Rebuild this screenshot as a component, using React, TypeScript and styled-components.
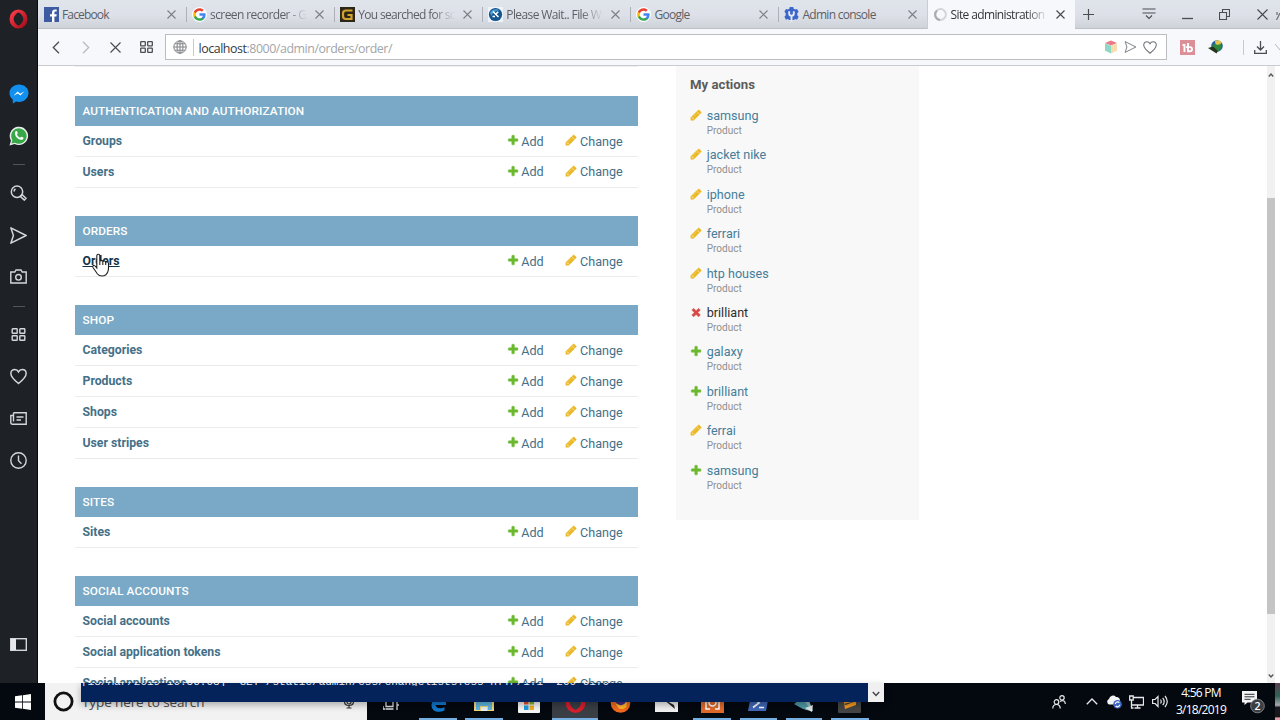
import React from "react";
import styled, { createGlobalStyle } from "styled-components";

const UI = `"Open Sans", "Noto Sans", sans-serif`;

const Global = createGlobalStyle`
  * { box-sizing: border-box; }
  body { margin: 0; background: #fff; overflow: hidden; }
`;

const Screen = styled.div`
  position: relative;
  width: 1280px;
  height: 720px;
  overflow: hidden;
  display: flex;
  flex-direction: column;
  font-family: Roboto, sans-serif;
`;
const Desktop = styled.div`
  display: flex;
  height: 683px;
`;

/* ---------- Opera sidebar ---------- */
const Rail = styled.nav`
  width: 38px;
  background: #1e2226;
  border-right: 1px solid #08090b;
  display: flex;
  flex-direction: column;
  align-items: center;
  padding-bottom: 30px;
`;
const RailItem = styled.div<{ $h: number }>`
  height: ${(p) => p.$h}px;
  width: 37px;
  flex: none;
  display: flex;
  align-items: center;
  justify-content: center;
`;
const RailRule = styled.div<{ $gap: number }>`
  flex: none;
  width: 12px;
  height: 1px;
  background: #51565a;
  margin-bottom: ${(p) => p.$gap}px;
`;
const Push = styled.div`
  flex: 1;
`;

/* ---------- Browser frame ---------- */
const Browser = styled.div`
  flex: 1;
  min-width: 0;
  display: flex;
  flex-direction: column;
`;
const TabStrip = styled.div`
  height: 29px;
  flex: none;
  display: flex;
  background: linear-gradient(#e0e4eb, #dde0e8 55%, #ced2d9);
  border-bottom: 1px solid #bdc1c7;
`;
const TabBox = styled.div<{ $active?: boolean }>`
  width: 148.1px;
  height: ${(p) => (p.$active ? 29 : 28)}px;
  flex: none;
  display: flex;
  align-items: center;
  padding: 0 10px 0 6px;
  position: relative;
  background: ${(p) => (p.$active ? "#f7f8fb" : "transparent")};
  border-left: ${(p) => (p.$active ? "1px solid #c9cdd3" : "0")};
  padding-left: ${(p) => (p.$active ? 5 : 6)}px;
  &:not(:last-child)::after {
    content: "";
    position: absolute;
    right: -1px;
    top: 7px;
    width: 1px;
    height: 15px;
    background: ${(p) => (p.$active ? "transparent" : "#adb1b8")};
  }
`;
const TabTitle = styled.div<{ $active?: boolean; $ls: number; $fade?: boolean }>`
  flex: 1;
  margin: 1px 6px 0 3px;
  font: 12px ${UI};
  letter-spacing: ${(p) => p.$ls}px;
  line-height: 18px;
  white-space: nowrap;
  color: ${(p) => (p.$active ? "#33363a" : "#5b5f66")};
  mask-image: ${(p) => (p.$fade ? "linear-gradient(to right, #000 76%, transparent 98%)" : "none")};
`;
const Slot = styled.div<{ $w: number }>`
  width: ${(p) => p.$w}px;
  height: 100%;
  flex: none;
  display: flex;
  align-items: center;
  justify-content: center;
`;
const Toolbar = styled.div`
  height: 37px;
  flex: none;
  display: flex;
  align-items: center;
  padding-left: 3px;
  background: #f7f8fb;
  border-bottom: 1px solid #c9cbd1;
`;
const Address = styled.div`
  width: 1002px;
  height: 26px;
  flex: none;
  display: flex;
  align-items: center;
  gap: 4px;
  background: #fff;
  border: 1px solid #bbbdc1;
  padding: 0 9px 0 7px;
  margin-left: 3px;
`;
const AddressRule = styled.div<{ $h: number }>`
  width: 1px;
  height: ${(p) => p.$h}px;
  background: #c8cacd;
`;
const Url = styled.div`
  flex: 1;
  margin-left: -1.5px;
  padding-top: 2px;
  font: 12.4px ${UI};
  letter-spacing: -0.44px;
  color: #a3a5a8;
  b {
    font-weight: 400;
    color: #35383c;
  }
`;

/* ---------- Admin page ---------- */
const Page = styled.main`
  flex: 1;
  min-height: 0;
  display: flex;
  background: #fff;
  padding-left: 37px;
  overflow: hidden;
`;
const AppList = styled.div`
  width: 562.5px;
  flex: none;
  border-top: 1px solid #eee;
  padding-top: 29px;
`;
const Module = styled.section`
  margin-bottom: 28.3px;
`;
const Caption = styled.h2`
  margin: 0;
  height: 30px;
  background: #79a9c6;
  color: #fff;
  font-size: 11.8px;
  font-weight: 500;
  letter-spacing: 0.08px;
  line-height: 31px;
  padding-left: 7.5px;
  text-transform: uppercase;
`;
const ModelRow = styled.div`
  height: 30.9px;
  display: flex;
  align-items: center;
  border-bottom: 1px solid #ececec;
  padding: 0.3px 0 0 7.5px;
  font-size: 12.6px;
  color: #447088;
`;
const ModelName = styled.a<{ $hover?: boolean }>`
  width: 424px;
  font-weight: 700;
  font-size: 12.25px;
  color: ${(p) => (p.$hover ? "#123347" : "#447088")};
  text-decoration: ${(p) => (p.$hover ? "underline" : "none")};
`;
const RowLink = styled.a<{ $w: number }>`
  width: ${(p) => p.$w}px;
  display: flex;
  align-items: center;
  gap: 2.6px;
  svg {
    margin-bottom: 2px;
  }
`;
const Recent = styled.aside`
  width: 243px;
  height: 454px;
  margin-left: 38px;
  flex: none;
  background: #f8f8f8;
  padding: 9px 0 0 14.5px;
`;
const RecentTitle = styled.h3`
  margin: 0 0 14px;
  font-size: 13.2px;
  line-height: 19px;
  font-weight: 700;
  color: #5c5c5c;
`;
const Action = styled.div`
  height: 39.4px;
  display: flex;
  gap: 4.5px;
  svg {
    margin-top: 1px;
  }
`;
const ActionName = styled.div<{ $dark?: boolean }>`
  font-size: 12.6px;
  line-height: 16px;
  color: ${(p) => (p.$dark ? "#2c2c2c" : "#447e9b")};
`;
const ActionType = styled.div`
  font-size: 10px;
  line-height: 14px;
  color: #8f8f8f;
`;
const ScrollTrack = styled.div`
  width: 8px;
  margin-left: auto;
  margin-right: 5px;
  background: #f1f1f1;
  display: flex;
  flex-direction: column;
  align-items: center;
  padding: 6px 0 4px;
`;
const ScrollThumb = styled.div`
  width: 8px;
  height: 416px;
  margin-top: 120px;
  margin-bottom: auto;
  background: #c4c4c4;
`;

/* ---------- Taskbar ---------- */
const Taskbar = styled.footer`
  height: 37px;
  display: flex;
  background: #04080f;
  color: #fff;
`;
const SearchBox = styled.div`
  width: 322px;
  height: 37px;
  background: #f2f2f2;
  display: flex;
  align-items: center;
  padding: 0 12px 0 8px;
  font: 13.5px ${UI};
  letter-spacing: -0.1px;
  color: #4b4b4b;
  span {
    flex: 1;
    margin-left: 8px;
  }
`;
const TaskButton = styled.div<{ $run?: number; $active?: boolean; $w?: number }>`
  width: ${(p) => p.$w ?? 45.75}px;
  height: 37px;
  flex: none;
  display: flex;
  align-items: center;
  justify-content: center;
  padding-top: 3px;
  position: relative;
  background: ${(p) => (p.$active ? "#3a3e45" : "none")};
  &::after {
    content: "";
    position: absolute;
    bottom: 0;
    height: 2px;
    width: ${(p) => p.$run ?? 0}px;
    background: #76b0e3;
  }
`;
const Clock = styled.div`
  width: 52px;
  margin-right: 7px;
  font: 12px/17px ${UI};
  letter-spacing: -0.75px;
  text-align: center;
  white-space: nowrap;
  padding-top: 1px;
`;
const EdgeStripe = styled.div`
  width: 5px;
  background: linear-gradient(#5d3f56, #2f6152 35%, #a7a7b0 60%, #171a1f 66%, #191417 92%, #e39aa7 94%);
`;

/* ---------- Console window lying over the taskbar ---------- */
const ConsoleWindow = styled.div`
  position: absolute;
  left: 81px;
  top: 683px;
  width: 803px;
  height: 19px;
  display: flex;
  justify-content: space-between;
  background: #03235a;
  box-shadow: 0 3px 7px rgba(0, 0, 0, 0.3);
`;
const ConsoleLine = styled.div`
  height: 3px;
  overflow: hidden;
  display: flex;
  align-items: flex-end;
  font: 11px/8px "Liberation Mono", monospace;
  white-space: pre;
  color: #e8edf5;
`;
const ConsoleScroll = styled.div`
  width: 16px;
  height: 19px;
  background: #f0f0f0;
  display: flex;
  align-items: center;
  justify-content: center;
  padding-top: 3px;
`;
const Pointer = styled.svg`
  position: absolute;
  left: 91px;
  top: 253px;
`;

/* ---------- Icons ---------- */
const Stroke = ({ w, h = w, c = "#d4d7da", sw = 1.3, d, children }: { w: number; h?: number; c?: string; sw?: number; d?: string; children?: React.ReactNode }) => (
  <svg width={w} height={h} viewBox={`0 0 ${w} ${h}`} fill="none" stroke={c} strokeWidth={sw}>
    {d && <path d={d} />}
    {children}
  </svg>
);
const adminPaths = {
  add: "M1600 796v192q0 40-28 68t-68 28h-416v416q0 40-28 68t-68 28h-192q-40 0-68-28t-28-68v-416h-416q-40 0-68-28t-28-68v-192q0-40 28-68t68-28h416v-416q0-40 28-68t68-28h192q40 0 68 28t28 68v416h416q40 0 68 28t28 68z",
  change: "M491 1536l91-91-235-235-91 91v107h128v128h107zm523-928q0-22-22-22-10 0-17 7l-542 542q-7 7-7 17 0 22 22 22 10 0 17-7l542-542q7-7 7-17zm-54-192l416 416-832 832h-416v-416zm683 96q0 53-37 90l-166 166-416-416 166-165q36-38 90-38 53 0 91 38l235 234q37 39 37 91z",
  del: "M1490 1322q0 40-28 68l-136 136q-28 28-68 28t-68-28l-294-294-294 294q-28 28-68 28t-68-28l-136-136q-28-28-28-68t28-68l294-294-294-294q-28-28-28-68t28-68l136-136q28-28 68-28t68 28l294 294 294-294q28-28 68-28t68 28l136 136q28 28 28 68t-28 68l-294 294 294 294q28 28 28 68z",
};
const adminColors = { add: "#6cb82f", change: "#ebb927", del: "#d84a48" };
type Kind = keyof typeof adminPaths;
const AdminIcon = ({ kind }: { kind: Kind }) => (
  <svg width="12.2" height="12.2" viewBox="0 0 1792 1792" fill={adminColors[kind]} stroke={adminColors[kind]} strokeWidth="70">
    <path d={adminPaths[kind]} />
  </svg>
);
const Cross = ({ size = 9, c = "#7b7f86" }: { size?: number; c?: string }) => (
  <Stroke w={size} c={c} sw={1.1} d={`M.5 .5L${size - 0.5} ${size - 0.5}M${size - 0.5} .5L.5 ${size - 0.5}`} />
);
const Heart = ({ w = 16, c, sw }: { w?: number; c?: string; sw?: number }) => (
  <svg width={w} height={w} viewBox="0 0 16 16" fill="none" stroke={c ?? "#d4d7da"} strokeWidth={sw ?? 1.4}>
    <path d="M8 14.6C3 10.6.8 8 .8 5.2.8 2.900 2.500 1.400 4.500 1.400 6 1.400 7.300 2.200 8 3.600 8.700 2.200 10 1.400 11.500 1.400c2 0 3.700 1.500 3.700 3.800C15.200 8 13 10.600 8 14.600z" />
  </svg>
);
const Tiles = ({ w, h, c }: { w: number; h: number; c: string }) => (
  <svg width={w} height={h} viewBox="0 0 14 13" fill="none" stroke={c} strokeWidth="1.4">
    <rect x=".7" y=".7" width="5" height="4.600" rx=".6" />
    <rect x="8.300" y=".7" width="5" height="4.600" rx=".6" />
    <rect x=".7" y="7.700" width="5" height="4.600" rx=".6" />
    <rect x="8.300" y="7.700" width="5" height="4.600" rx=".6" />
  </svg>
);
const Send = ({ w, h, c, sw }: { w: number; h: number; c: string; sw: number }) => (
  <svg width={w} height={h} viewBox="0 0 16 16" fill="none" stroke={c} strokeWidth={sw} strokeLinejoin="round">
    <path d="M.8 .8L15.200 8 .8 15.200 3.200 8z" />
  </svg>
);
const GoogleG = () => (
  <svg width="15" height="15" viewBox="-1 -1 26 26">
    <circle cx="12" cy="12" r="13" fill="#fff" />
    <path fill="#4285F4" d="M22.560 12.250c0-.78-.07-1.530-.2-2.250H12v4.260h5.920c-.26 1.370-1.040 2.530-2.210 3.310v2.770h3.570c2.080-1.920 3.280-4.740 3.280-8.090z" />
    <path fill="#34A853" d="M12 23c2.970 0 5.460-.98 7.280-2.660l-3.570-2.770c-.98.66-2.230 1.060-3.710 1.060-2.860 0-5.290-1.930-6.160-4.530H2.180v2.840C3.990 20.530 7.700 23 12 23z" />
    <path fill="#FBBC05" d="M5.840 14.090c-.22-.66-.35-1.360-.35-2.090s.13-1.430.35-2.090V7.070H2.180C1.430 8.550 1 10.220 1 12s.43 3.450 1.180 4.930l3.660-2.840z" />
    <path fill="#EA4335" d="M12 5.380c1.620 0 3.060.56 4.210 1.640l3.150-3.150C17.450 2.090 14.970 1 12 1 7.700 1 3.990 3.470 2.180 7.070l3.660 2.840c.87-2.600 3.300-4.530 6.160-4.530z" />
  </svg>
);
const FacebookMark = () => (
  <svg width="15" height="15" viewBox="0 0 15 15">
    <rect width="15" height="15" fill="#3c5ba0" />
    <path fill="#fff" d="M8 15V9.500H6V7.200h2V5.500C8 3.400 9.200 2.400 11 2.400h1.700v2.200h-1.200c-.9 0-1.100.4-1.100 1.100v1.500h2.300l-.3 2.300h-2V15z" />
  </svg>
);
const GoldMark = () => (
  <svg width="15" height="15" viewBox="0 0 15 15">
    <rect width="15" height="15" fill="#2b2618" />
    <path d="M12.500 3.500H6Q3 3.500 3 6.500V9Q3 12 6 12H11.500V8H7.500" fill="none" stroke="#d3a12c" strokeWidth="2.200" />
  </svg>
);
const FileMark = () => (
  <svg width="15" height="15" viewBox="0 0 15 15">
    <rect width="15" height="15" fill="#eef3f7" />
    <circle cx="7.500" cy="7.500" r="6.600" fill="#14558f" />
    <path d="M2 6C3 2.500 8 1 11.500 3.200 9 3.500 5 4.500 3.500 9z" fill="#4d9bd0" />
    <path d="M5 4.500l5.500 5.500M10.200 4.800l-2 2M4.500 9.500h2.500" stroke="#fff" strokeWidth="1.600" />
  </svg>
);
const ConsoleMark = () => (
  <svg width="15" height="15" viewBox="0 0 15 15">
    <path d="M5.800 0h3.400l.5 1.800 1.500.8L13 2l1.600 2.800-1.300 1.500v2l1.300 1.500L13 12.700l-1.800-.6-1.500.9H5.300l-1.500-.9-1.800.6L.4 9.800l1.300-1.500v-2L.4 4.800 2 2l1.800.6 1.500-.8z" fill="#3b66c9" />
    <path d="M5.200 4.300v2.400Q5.200 8.800 7.500 8.800t2.300-2.100V4.300M7.500 8.800V15" fill="none" stroke="#e6e9f1" strokeWidth="1.900" />
  </svg>
);
const Spinner = () => (
  <Stroke w={15} sw={2} c="#d3d5d8">
    <circle cx="7.500" cy="7.500" r="5.400" />
    <path d="M4 3.400A5.400 5.400 0 0 0 7 12.900" stroke="#a9acb0" />
  </Stroke>
);
const Globe = () => (
  <Stroke w={14} c="#7f8286" sw={1}>
    <circle cx="7" cy="7" r="6.200" />
    <ellipse cx="7" cy="7" rx="3" ry="6.200" />
    <path d="M.8 7h12.400M1.800 3.800h10.400M1.800 10.200h10.400M7 .8v12.400" />
  </Stroke>
);

const tabs = [
  { title: "Facebook", icon: <FacebookMark />, ls: -0.85 },
  { title: "screen recorder - G", icon: <GoogleG />, ls: -0.6, fade: true },
  { title: "You searched for sc", icon: <GoldMark />, ls: -0.67, fade: true },
  { title: "Please Wait.. File Wi", icon: <FileMark />, ls: -0.6, fade: true },
  { title: "Google", icon: <GoogleG />, ls: -0.7 },
  { title: "Admin console", icon: <ConsoleMark />, ls: -0.72 },
  { title: "Site administration", icon: <Spinner />, ls: -0.62, active: true, fade: true },
];
const modules = [
  { name: "Authentication and Authorization", models: ["Groups", "Users"] },
  { name: "Orders", models: ["Orders"] },
  { name: "Shop", models: ["Categories", "Products", "Shops", "User stripes"] },
  { name: "Sites", models: ["Sites"] },
  { name: "Social Accounts", models: ["Social accounts", "Social application tokens", "Social applications"] },
];
const actions: { kind: Kind; name: string }[] = [
  { kind: "change", name: "samsung" },
  { kind: "change", name: "jacket nike" },
  { kind: "change", name: "iphone" },
  { kind: "change", name: "ferrari" },
  { kind: "change", name: "htp houses" },
  { kind: "del", name: "brilliant" },
  { kind: "add", name: "galaxy" },
  { kind: "add", name: "brilliant" },
  { kind: "change", name: "ferrai" },
  { kind: "add", name: "samsung" },
];

const Sidebar = () => (
  <Rail>
    <RailItem $h={37}>
      <svg width="19" height="20" viewBox="0 0 19 20">
        <defs>
          <linearGradient id="op" x1="0" y1="0" x2="1" y2="1">
            <stop offset="0" stopColor="#ff3a48" />
            <stop offset="1" stopColor="#a50e1c" />
          </linearGradient>
        </defs>
        <ellipse cx="9.500" cy="10" rx="6.900" ry="7.400" fill="none" stroke="url(#op)" strokeWidth="4.200" />
        <ellipse cx="9.500" cy="10" rx="3.800" ry="6.400" fill="#1e2226" />
      </svg>
    </RailItem>
    <RailItem $h={35} />
    <RailItem $h={43}>
      <svg width="20" height="20" viewBox="0 0 20 20">
        <path d="M10 .5C4.700.5.500 4.200.500 9c0 2.800 1.300 5 3.300 6.600V19.500l3.300-2c.9.200 1.900.4 2.900.4 5.300 0 9.500-3.900 9.500-8.900S15.300.5 10 .5z" fill="#1290f0" />
        <path d="M4.500 11.800L8.600 7.500l2.600 2.200 4.300-2.500-4.100 4.400-2.500-2.200z" fill="#fff" />
      </svg>
    </RailItem>
    <RailItem $h={42}>
      <svg width="20" height="20" viewBox="0 0 20 20">
        <path d="M.5 19.500L2 14.600A9.200 9.200 0 1 1 5.600 18z" fill="#e9eeea" />
        <path d="M2.400 17.600l1-3.400a7.700 7.700 0 1 1 2.600 2.500z" fill="#37a847" />
        <path d="M6.500 5.500c1-.9 1.700-.2 2.200 1.400.2.700-.7 1-.7 1.500.6 1.500 1.700 2.600 3.200 3.200.6 0 .8-1 1.500-.8 1.900.8 2.300 1.100 1.500 2.100-1.300 1.600-3.300 1-5.100-.2C7 11.400 4.800 7.500 6.500 5.500z" fill="#fff" />
      </svg>
    </RailItem>
    <RailItem $h={7} />
    <RailRule $gap={6} />
    <RailItem $h={43}>
      <Stroke w={17} h={16} sw={1.5}>
        <circle cx="7" cy="6.700" r="5.700" />
        <path d="M11 10.500l1-1 4 3.800-1.700 1.800-4-3.700zM4 6.500A3 3 0 0 1 5.500 4" />
      </Stroke>
    </RailItem>
    <RailItem $h={42}>
      <Send w={17} h={17} c="#d4d7da" sw={1.4} />
    </RailItem>
    <RailItem $h={41}>
      <Stroke w={17} h={15} sw={1.4}>
        <path d="M.8 3h4l1.200-2h5l1.200 2h4v11H.8z" />
        <circle cx="8.500" cy="8.300" r="2.800" />
      </Stroke>
    </RailItem>
    <RailItem $h={9} />
    <RailRule $gap={6} />
    <RailItem $h={42}>
      <Tiles w={15} h={13} c="#d4d7da" />
    </RailItem>
    <RailItem $h={42}>
      <Heart w={17} />
    </RailItem>
    <RailItem $h={42}>
      <Stroke w={17} h={13} sw={1.4}>
        <path d="M3.500 .8h12.700v11.400H2.500Q.8 12.200.8 10.500V3.500h2.700M3.500 .8V9.500M6.500 5h7M6.500 8h4.500" />
      </Stroke>
    </RailItem>
    <RailItem $h={42}>
      <Stroke w={17} sw={1.4}>
        <circle cx="8.500" cy="8.500" r="7.700" />
        <path d="M8.500 3.500v5.200l3 3" />
      </Stroke>
    </RailItem>
    <Push />
    <RailItem $h={18}>
      <Stroke w={17} h={13} sw={1.4}>
        <rect x=".7" y=".7" width="15.600" height="11.600" />
        <path d="M1 1h5v11H1z" fill="#e6e8ea" stroke="none" />
      </Stroke>
    </RailItem>
  </Rail>
);

export default function App() {
  return (
    <Screen>
      <Global />
      <Desktop>
        <Sidebar />
        <Browser>
          <TabStrip>
            {tabs.map((t, i) => (
              <TabBox key={i} $active={t.active}>
                {t.icon}
                <TabTitle $active={t.active} $ls={t.ls} $fade={t.fade}>{t.title}</TabTitle>
                <Cross c={t.active ? "#45484d" : undefined} />
              </TabBox>
            ))}
            <Slot $w={27}><Stroke w={11} c="#4a4d53" d="M5.500 0v11M0 5.500h11" sw={1.2} /></Slot>
            <Push />
            <Slot $w={38}><Stroke w={14} h={12} c="#4a4d53" sw={1.1} d="M.5 1h13M.5 5h13M4 7.500l3 3 3-3" /></Slot>
            <Slot $w={38}><Stroke w={11} h={12} c="#4a4d53" d="M0 10.500h11" /></Slot>
            <Slot $w={37}><Stroke w={11} h={11} c="#4a4d53" sw={1.1} d="M.5 3.500h7v7h-7zM3.500 3.500V.5h7v7h-3" /></Slot>
            <Slot $w={5} />
            <Slot $w={28}><Cross size={11} c="#45484d" /></Slot>
            <Slot $w={4}><Stroke w={4} h={11} c="#6a6d72" sw={1.200} d="M.5 11L4 4M1 3v3" /></Slot>
          </TabStrip>
          <Toolbar>
            <Slot $w={30}><Stroke w={8} h={13} c="#4a4d53" d="M7 .8L1.300 6.500 7 12.200" /></Slot>
            <Slot $w={30}><Stroke w={8} h={13} c="#b9bbc0" d="M1 .8l5.700 5.700L1 12.200" /></Slot>
            <Slot $w={29}><Cross size={11} c="#45484d" /></Slot>
            <Slot $w={32}><Tiles w={13} h={12} c="#4a4d53" /></Slot>
            <Address>
              <Globe />
              <Slot $w={5}><AddressRule $h={17} /></Slot>
              <Url><b>localhost</b>:8000/admin/orders/order/</Url>
              <Slot $w={14}>
                <svg width="14" height="14" viewBox="0 0 14 14">
                  <path d="M7 .5l6 2.500-6 2.500L1 3z" fill="#ea7a86" />
                  <path d="M1 3.200l6 2.500v7.800L1 10.800z" fill="#8fd9c4" />
                  <path d="M13 3.200L7 5.700v7.800l6-2.700z" fill="#f7dcae" />
                </svg>
              </Slot>
              <Slot $w={17}><Send w={13} h={12} c="#7c8085" sw={1.3} /></Slot>
              <Slot $w={14}><Heart w={15} c="#6f7378" sw={1.2} /></Slot>
            </Address>
            <Slot $w={40}>
              <svg width="15" height="15" viewBox="0 0 15 15">
                <rect width="15" height="15" fill="#dc8f97" />
                <path d="M2.500 5h2v7M8 3v8.300h2q2 0 2-2.100t-2-2.100H6" fill="none" stroke="#fff" strokeWidth="1.900" />
              </svg>
            </Slot>
            <Slot $w={18}>
              <svg width="16" height="14" viewBox="0 0 16 14">
                <circle cx="9" cy="6" r="5.800" fill="#27639b" />
                <path d="M7 1q4-2 6.500 1.500l-2 3-4-1z" fill="#e5c64a" />
                <path d="M4 6q3-3 5-1l4-1q1.500 5-3 7.500z" fill="#2c8a3a" />
                <path d="M0 8l5-1.500 5 4.500-1.500 2.500z" fill="#27351f" />
              </svg>
            </Slot>
            <Slot $w={7} />
            <Slot $w={22}><AddressRule $h={15} /></Slot>
            <Stroke w={13} h={13} c="#4a4d53" d="M6.500 0v8.500M3 5.500l3.500 3.500L10 5.500M.7 9v3.300h11.600V9" />
            <Slot $w={8} />
            <Stroke w={5} h={13} c="#b5b7bb" sw={1} d="M0 3l5 6" />
          </Toolbar>
          <Page>
            <AppList>
              {modules.map((m) => (
                <Module key={m.name}>
                  <Caption>{m.name}</Caption>
                  {m.models.map((name) => (
                    <ModelRow key={name}>
                      <ModelName $hover={name === "Orders"}><span>{name}</span></ModelName>
                      <RowLink $w={58.8}><AdminIcon kind="add" />Add</RowLink>
                      <RowLink $w={70}><AdminIcon kind="change" />Change</RowLink>
                    </ModelRow>
                  ))}
                </Module>
              ))}
            </AppList>
            <Recent>
              <RecentTitle>My actions</RecentTitle>
              {actions.map((a, i) => (
                <Action key={i}>
                  <AdminIcon kind={a.kind} />
                  <div>
                    <ActionName $dark={a.kind === "del"}>{a.name}</ActionName>
                    <ActionType>Product</ActionType>
                  </div>
                </Action>
              ))}
            </Recent>
            <ScrollTrack>
              <Stroke w={6} h={6} c="#55585c" sw={1.4} d="M.8 4.500L3 2l2.200 2.500" />
              <ScrollThumb />
              <Stroke w={6} h={6} c="#55585c" sw={1.400} d="M.8 1.500L3 4l2.200-2.500" />
            </ScrollTrack>
          </Page>
        </Browser>
      </Desktop>

      <Taskbar>
        <Slot $w={45}>
          <svg width="16" height="16" viewBox="0 0 16 16" fill="#fff">
            <path d="M0 2.300L7 1.300V7.600H0zM7.800 1.200L16 0v7.600H7.800zM0 8.400h7v6.300L0 13.700zM7.800 8.400H16V16l-8.200-1.200z" />
          </svg>
        </Slot>
        <SearchBox>
          <Stroke w={21} c="#111" sw={2.8}><circle cx="10.500" cy="10.500" r="8.600" /></Stroke>
          <span>Type here to search</span>
          <Stroke w={12} h={15} c="#333" sw={1.200} d="M4 3a2 2 0 0 1 4 0v5a2 2 0 0 1-4 0zM1.500 7.500q0 4 4.500 4t4.500-4M6 11.500V14M3.500 14h5" />
        </SearchBox>
        <TaskButton $w={48}>
          <Stroke w={16} h={14} sw={1.300} d="M0 1h11M0 13h2M3 4.500h7v6H3zM0 10v3M10.500 13h-8M14 0v14M14 9h2" c="#e2e2e2" />
        </TaskButton>
        <TaskButton $run={38}>
          <svg width="18" height="18" viewBox="0 0 18 18">
            <path d="M1 9C2 3.500 5.500 1 9.500 1 14 1 17 4 17 8.500V11H6.500c.3 3 4.500 4.500 9 2.200v3.300C9 19.500 2 17 2.500 10.500 3 7.500 5 6 6.500 5.500 4.500 6 2.500 7 1 9z" fill="#1179cf" />
          </svg>
        </TaskButton>
        <TaskButton $run={38}>
          <svg width="20" height="17" viewBox="0 0 20 17">
            <path d="M0 1h7l2 2h11v13H0z" fill="#f3d77a" />
            <path d="M2 7h16v8h-4v-4H6v4H2z" fill="#5fb8e0" />
            <path d="M7 12h6v4H7z" fill="#e9f2f4" />
          </svg>
        </TaskButton>
        <TaskButton>
          <svg width="22" height="19" viewBox="0 0 22 19">
            <rect y="3" width="22" height="16" rx="1" fill="#f6f6f6" />
            <path d="M6 6h4.500v4.500H6z" fill="#e6522c" /><path d="M11.500 6H16v4.500h-4.500z" fill="#7cb52d" />
            <path d="M6 11.500h4.500V16H6z" fill="#1f9be0" /><path d="M11.500 11.500H16V16h-4.500z" fill="#f2b01e" />
          </svg>
        </TaskButton>
        <TaskButton $run={46} $active>
          <svg width="21" height="20" viewBox="0 0 21 20">
            <ellipse cx="10.500" cy="10" rx="7.700" ry="7.700" fill="none" stroke="#d81f2c" strokeWidth="4.400" />
            <ellipse cx="10.500" cy="10" rx="4.200" ry="6.700" fill="#3a3e45" />
          </svg>
        </TaskButton>
        <TaskButton>
          <svg width="21" height="20" viewBox="0 0 21 20">
            <circle cx="10.500" cy="10" r="9.800" fill="#f26a1f" />
            <circle cx="11" cy="9.500" r="5.600" fill="#4b2a7d" />
            <path d="M5 9q3 4 7 3 4-1 4-5 3 7-3 9-6 1-8-7z" fill="#ffb52b" />
          </svg>
        </TaskButton>
        <TaskButton>
          <svg width="23" height="17" viewBox="0 0 23 17">
            <rect width="23" height="17" fill="#f1f1f1" />
            <path d="M8 4l12 10-1-4z" fill="#222" />
          </svg>
        </TaskButton>
        <TaskButton $run={38}>
          <svg width="23" height="20" viewBox="0 0 23 20">
            <rect width="23" height="20" fill="#e0692a" />
            <path d="M5 9v7h4M18 9v7h-4" fill="none" stroke="#fff" strokeWidth="1.500" />
            <circle cx="11.500" cy="9.500" r="3.500" fill="none" stroke="#fff" strokeWidth="1.500" />
          </svg>
        </TaskButton>
        <TaskButton $run={37}>
          <svg width="21" height="16" viewBox="0 0 21 16">
            <path d="M3 0h18l-3 16H0z" fill="#3f68b8" />
            <path d="M6 3l5 5-6 4.500M11 12.500h5" fill="none" stroke="#fff" strokeWidth="1.700" />
          </svg>
        </TaskButton>
        <TaskButton $run={36}>
          <svg width="20" height="18" viewBox="0 0 20 18">
            <path d="M1 9L14 4l5 13-7-1z" fill="#8fb9bf" />
            <path d="M0 10l9-5 8 11-8-1z" fill="#4f9aa5" />
            <path d="M11 14l8-3-1 7z" fill="#dfe7e8" />
          </svg>
        </TaskButton>
        <TaskButton $run={38}>
          <svg width="23" height="20" viewBox="0 0 23 20">
            <rect width="23" height="20" rx="1" fill="#454545" />
            <path d="M5 4l13 4-13 3 3 1 10-4v4L7 16z" fill="#f79a1f" />
          </svg>
        </TaskButton>
        <Push />
        <Slot $w={44}>
          <Stroke w={14} h={14} c="#e6e8ea" sw={1.200}>
            <circle cx="4.500" cy="7" r="2.300" /><path d="M.8 13.500q0-4 3.700-4t3.700 4M8 6.500q2-1.500 4-.5 1.300 1 1.300 3" />
            <circle cx="10" cy="2.800" r="2.200" />
          </Stroke>
        </Slot>
        <Slot $w={21}><Stroke w={12} h={7} c="#e6e8ea" d="M.8 6.200L6 1l5.200 5.200" /></Slot>
        <Slot $w={24}>
          <svg width="16" height="14" viewBox="0 0 16 14">
            <path d="M3 9.500a3 3 0 0 1 0-5.500 4 4 0 0 1 7-2 3.500 3.500 0 0 1 4 3.500l-4 4z" fill="#f2f4f6" />
            <circle cx="11.500" cy="9.300" r="4.300" fill="#3f68c4" />
            <path d="M9.300 9a2.300 2.300 0 0 1 4-1.300M13.700 9.700a2.300 2.300 0 0 1-4 1.300" fill="none" stroke="#fff" strokeWidth="1.200" />
          </svg>
        </Slot>
        <Slot $w={21}><Stroke w={15} h={14} c="#e6e8ea" sw={1.300} d="M4.500 2.500h10v7.500H3M8.500 10v3M5.500 13h6M.7 1h3.500v4H.7zM2.500 5v8h2" /></Slot>
        <Slot $w={25}><Stroke w={16} h={13} c="#e6e8ea" sw={1.200} d="M.6 4.500h2.500L6 1.500v10L3.100 8.500H.6zM8.500 4.500q1.500 2 0 4M10.700 2.800q3 3.700 0 7.400M13 1q4.500 5.500 0 11" /></Slot>
        <Slot $w={3} />
        <Clock>4:56 PM<br />3/18/2019</Clock>
        <Slot $w={37}>
          <svg width="24" height="24" viewBox="0 0 24 24">
            <path d="M1 1h15v11.500H6.500L3.500 15v-2.500H1z" fill="#f4f4f4" />
            <path d="M3.500 4.300h10M3.500 6.800h10M3.500 9.300h6" stroke="#2b2f35" strokeWidth="1" />
            <circle cx="16.500" cy="16" r="6.800" fill="#3b3e43" stroke="#85888c" strokeWidth=".9" />
            <text x="16.500" y="20" textAnchor="middle" fontFamily="Open Sans" fontSize="10.500" fontWeight="600" fill="#fff">2</text>
          </svg>
        </Slot>
        <Slot $w={4} />
        <EdgeStripe />
      </Taskbar>

      <ConsoleWindow>
        <ConsoleLine>{`[18/Mar/2019 16:56:03] "GET /static/admin/css/changelists.css HTTP/1.1" 200 6170`}</ConsoleLine>
        <ConsoleScroll><Stroke w={8} h={6} c="#44474b" sw={1.500} d="M.8 1l3.200 3.500L7.200 1" /></ConsoleScroll>
      </ConsoleWindow>
      <Pointer width="19" height="24" viewBox="0 0 19 24" fill="#fff" stroke="#222" strokeWidth="1.1">
        <path d="M5.800 15V3q0-1.700 1.500-1.700T8.800 3v5.500q.3-1.100 1.600-1.100 1.400.1 1.400 1.300.4-.8 1.600-.7 1.300.2 1.300 1.400.5-.6 1.500-.4 1.300.3 1.300 1.400V15q0 4.500-3 7-1.500 1-3.500 1-3 0-4.500-2L2 14.500q-.7-1.300.4-1.900 1-.4 1.700.4z" />
        <path d="M8.800 8.500V12M11.800 8.800V12M14.700 9.500V12" fill="none" />
      </Pointer>
    </Screen>
  );
}
